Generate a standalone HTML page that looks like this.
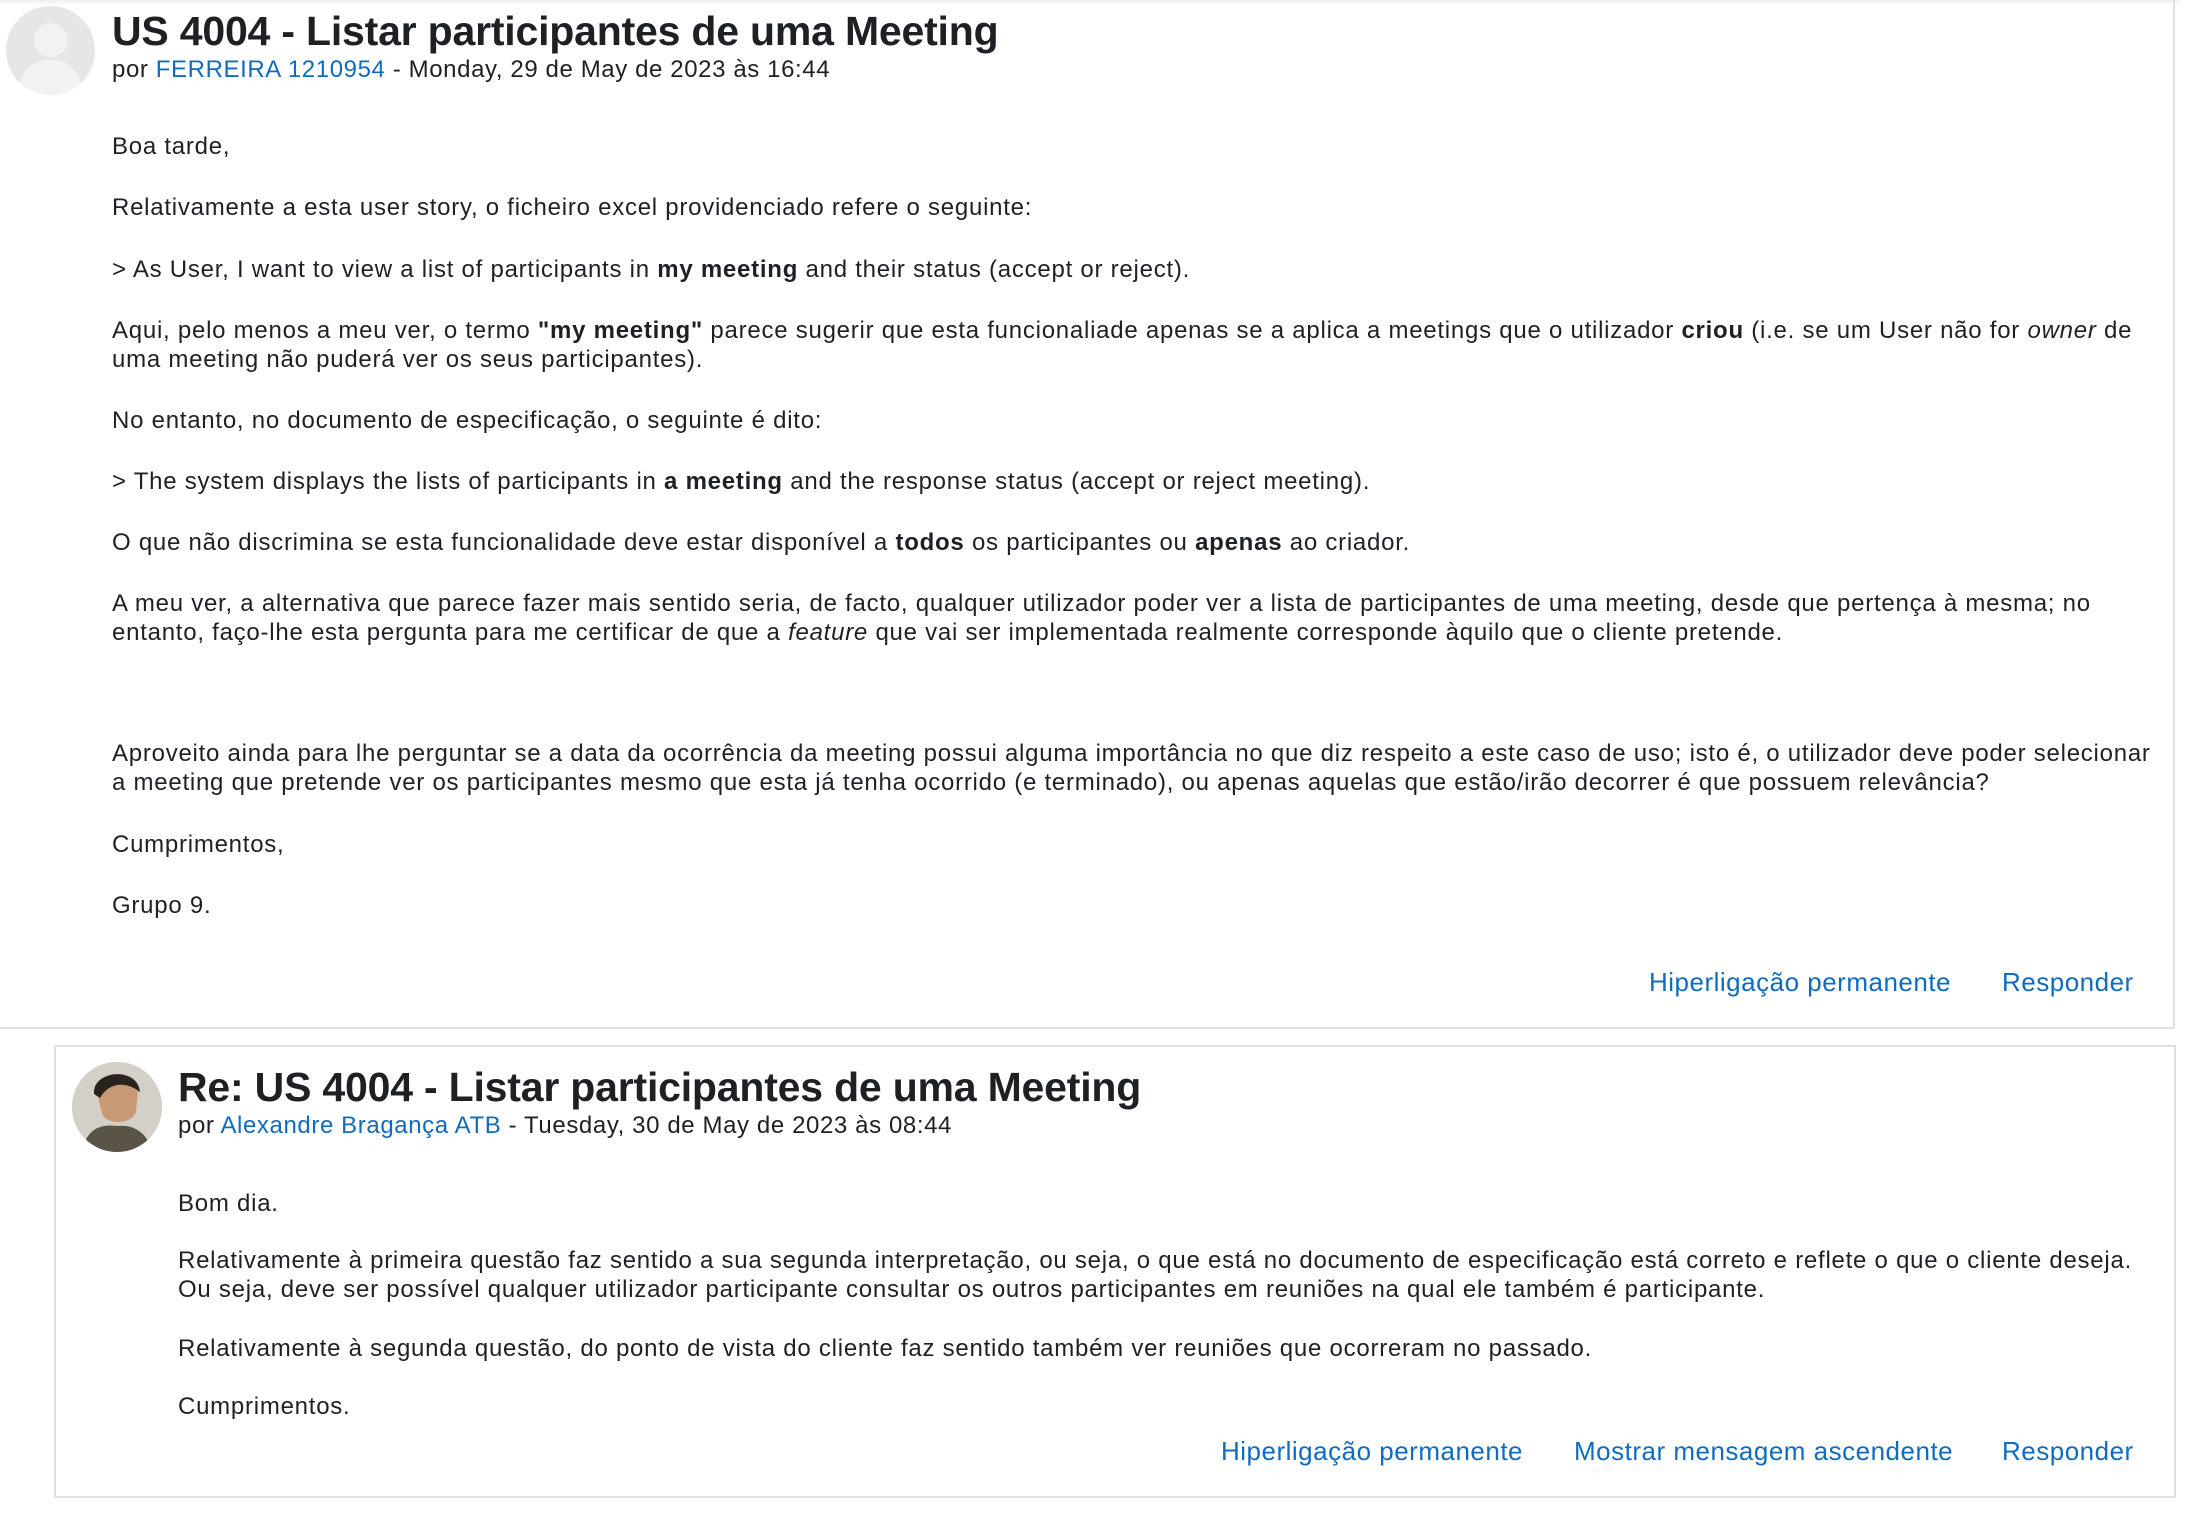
<!DOCTYPE html>
<html><head><meta charset="utf-8"><style>
*{margin:0;padding:0;box-sizing:border-box}
body{width:2196px;height:1514px;background:#fff;position:relative;overflow:hidden;font-family:"Liberation Sans",Arial,sans-serif;color:#1d2125}
.box1{position:absolute;left:-5px;top:0;width:2180px;height:1029px;border:2px solid #dee2e6;border-top:none;border-left:none}
.top{position:absolute;left:0;top:0;width:2180px;height:6px;background:linear-gradient(#eef0f2,#fff)}
.box2{position:absolute;left:54px;top:1045px;width:2122px;height:453px;border:2px solid #dee2e6}
.av{position:absolute;border-radius:50%;overflow:hidden}
.h{position:absolute;font-weight:bold;font-size:41px;white-space:nowrap;color:#1d2125;letter-spacing:-0.2px}
.m{position:absolute;font-size:24px;letter-spacing:0.6px;white-space:nowrap;color:#1d2125}
a{color:#0f6cbf;text-decoration:none}
.t{position:absolute;font-size:24px;letter-spacing:0.75px;line-height:29px;white-space:nowrap}
.l{position:absolute;font-size:26px;letter-spacing:0.5px;color:#0f6cbf;white-space:nowrap}
</style></head><body>
<div class="top"></div>
<div class="box1"></div>
<div class="box2"></div>

<div class="av" style="left:6px;top:6px;width:89px;height:89px;background:#e6e6e6">
<svg width="89" height="89" viewBox="0 0 89 89"><circle cx="44.5" cy="34" r="17" fill="#f2f2f2"/><path d="M12 89 C14 62 28 54 44.5 54 C61 54 75 62 77 89Z" fill="#f2f2f2"/></svg></div>
<div class="h" style="left:112px;top:8px">US 4004 - Listar participantes de uma Meeting</div>
<div class="m" style="left:112px;top:56px">por <a>FERREIRA 1210954</a> - Monday, 29 de May de 2023 às 16:44</div>

<div class="t" style="left:112px;top:132px">Boa tarde,</div>
<div class="t" style="left:112px;top:193px">Relativamente a esta user story, o ficheiro excel providenciado refere o seguinte:</div>
<div class="t" style="left:112px;top:255px">&gt; As User, I want to view a list of participants in <b>my meeting</b> and their status (accept or reject).</div>
<div class="t" style="left:112px;top:316px">Aqui, pelo menos a meu ver, o termo <b>"my meeting"</b> parece sugerir que esta funcionaliade apenas se a aplica a meetings que o utilizador <b>criou</b> (i.e. se um User não for <i>owner</i> de<br>uma meeting não puderá ver os seus participantes).</div>
<div class="t" style="left:112px;top:406px">No entanto, no documento de especificação, o seguinte é dito:</div>
<div class="t" style="left:112px;top:467px">&gt; The system displays the lists of participants in <b>a meeting</b> and the response status (accept or reject meeting).</div>
<div class="t" style="left:112px;top:528px">O que não discrimina se esta funcionalidade deve estar disponível a <b>todos</b> os participantes ou <b>apenas</b> ao criador.</div>
<div class="t" style="left:112px;top:589px">A meu ver, a alternativa que parece fazer mais sentido seria, de facto, qualquer utilizador poder ver a lista de participantes de uma meeting, desde que pertença à mesma; no<br>entanto, faço-lhe esta pergunta para me certificar de que a <i>feature</i> que vai ser implementada realmente corresponde àquilo que o cliente pretende.</div>
<div class="t" style="left:112px;top:739px">Aproveito ainda para lhe perguntar se a data da ocorrência da meeting possui alguma importância no que diz respeito a este caso de uso; isto é, o utilizador deve poder selecionar<br>a meeting que pretende ver os participantes mesmo que esta já tenha ocorrido (e terminado), ou apenas aquelas que estão/irão decorrer é que possuem relevância?</div>
<div class="t" style="left:112px;top:830px">Cumprimentos,</div>
<div class="t" style="left:112px;top:891px">Grupo 9.</div>

<div class="l" style="left:1649px;top:967px">Hiperligação permanente</div>
<div class="l" style="left:2002px;top:967px">Responder</div>

<div class="av" style="left:72px;top:1062px;width:90px;height:90px;background:#c9c4bc">
<svg width="90" height="90" viewBox="0 0 90 90"><rect width="90" height="90" fill="#d4d0c8"/><path d="M25 30 C25 10 60 8 66 28 L64 50 C60 62 36 64 30 52Z" fill="#c79a74"/><path d="M22 32 C20 8 66 4 68 30 L62 26 C50 20 36 22 28 36Z" fill="#2a231e"/><path d="M10 90 C14 66 30 62 45 64 C60 62 76 70 80 90Z" fill="#5a5446"/></svg></div>
<div class="h" style="left:178px;top:1064px">Re: US 4004 - Listar participantes de uma Meeting</div>
<div class="m" style="left:178px;top:1112px">por <a>Alexandre Bragança ATB</a> - Tuesday, 30 de May de 2023 às 08:44</div>

<div class="t" style="left:178px;top:1189px">Bom dia.</div>
<div class="t" style="left:178px;top:1246px">Relativamente à primeira questão faz sentido a sua segunda interpretação, ou seja, o que está no documento de especificação está correto e reflete o que o cliente deseja.<br>Ou seja, deve ser possível qualquer utilizador participante consultar os outros participantes em reuniões na qual ele também é participante.</div>
<div class="t" style="left:178px;top:1334px">Relativamente à segunda questão, do ponto de vista do cliente faz sentido também ver reuniões que ocorreram no passado.</div>
<div class="t" style="left:178px;top:1392px">Cumprimentos.</div>

<div class="l" style="left:1221px;top:1436px">Hiperligação permanente</div>
<div class="l" style="left:1574px;top:1436px">Mostrar mensagem ascendente</div>
<div class="l" style="left:2002px;top:1436px">Responder</div>
</body></html>
